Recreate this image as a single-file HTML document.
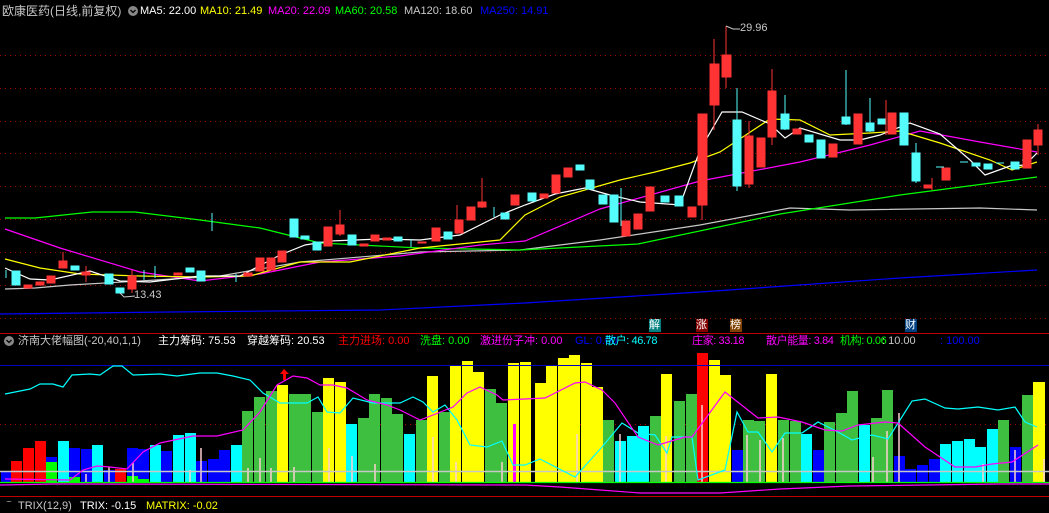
<!DOCTYPE html>
<html><head><meta charset="utf-8"><style>
body{margin:0;background:#000;width:1049px;height:502px;overflow:hidden;position:relative;font-family:"Liberation Sans","Noto Sans CJK SC",sans-serif;}
.t{position:absolute;font-size:11px;white-space:nowrap;line-height:14px}
.s{letter-spacing:-0.4px}
svg{position:absolute;left:0;top:0}
</style></head><body>
<svg width="1049" height="502" viewBox="0 0 1049 502">
<g stroke="#a00000" stroke-width="1" stroke-dasharray="1,4">
<line x1="0" y1="55.5" x2="1049" y2="55.5"/><line x1="0" y1="88.5" x2="1049" y2="88.5"/><line x1="0" y1="121.5" x2="1049" y2="121.5"/><line x1="0" y1="153.5" x2="1049" y2="153.5"/><line x1="0" y1="186.5" x2="1049" y2="186.5"/><line x1="0" y1="219.5" x2="1049" y2="219.5"/><line x1="0" y1="252.5" x2="1049" y2="252.5"/><line x1="0" y1="285.5" x2="1049" y2="285.5"/><line x1="0" y1="318.5" x2="1049" y2="318.5"/><line x1="0" y1="424.5" x2="1049" y2="424.5"/>
</g>
<line x1="0" y1="333.5" x2="1049" y2="333.5" stroke="#c00000"/>
<line x1="0" y1="496.5" x2="1049" y2="496.5" stroke="#c00000"/>
<g fill="none" stroke-width="1.2">
<polyline stroke="#0000ff" points="0,314 170,312 380,310 525,303 700,292 900,278 1037,270"/>
<polyline stroke="#c8c8c8" points="5,289 35,288 70,285 140,281 220,276 300,262 420,252 520,250 600,240 700,225 790,208 850,210 980,208 1037,210"/>
<polyline stroke="#00ff00" points="5,218 35,218 92,212 135,212 200,220 260,228 320,243 420,248 520,250 638,244 780,214 900,195 1037,177"/>
<polyline stroke="#ff00ff" points="5,229 60,248 140,272 200,281 260,274 320,262 400,256 480,245 525,241 600,209 700,181 800,162 870,145 920,131 980,142 1037,152"/>
<polyline stroke="#ffff00" points="5,259 40,268 80,274 140,276 200,277 250,276 300,262 350,262 420,248 500,240 525,215 560,197 620,180 655,172 690,163 720,152 770,119 800,120 830,135 870,133 900,131 940,143 990,160 1012,170 1037,162"/>
<polyline stroke="#ffffff" points="5,268 30,279 50,280 90,271 120,281 150,282 200,276 240,276 280,255 305,245 330,241 380,239 420,240 460,235 500,215 525,205 555,194 585,188 610,195 640,202 680,205 700,150 722,112 742,112 770,124 785,138 800,128 840,140 860,140 880,135 910,123 940,134 970,160 985,175 1010,166 1025,165 1037,153"/>
</g>
<g fill="#54fcfc" stroke="#54fcfc">
<rect x="12" y="271" width="8" height="14"/><rect x="71" y="266" width="8" height="4"/><rect x="105" y="274" width="8" height="10"/><rect x="116" y="288" width="8" height="5"/><rect x="186" y="268" width="8" height="4"/><rect x="197" y="271" width="8" height="10"/><rect x="290" y="219" width="8" height="18"/><rect x="301" y="236" width="8" height="3"/><rect x="313" y="242" width="8" height="8"/><rect x="348" y="235" width="8" height="10"/><rect x="394" y="237" width="8" height="4"/><rect x="444" y="232" width="8" height="7"/><rect x="501" y="213" width="8" height="6"/><rect x="528" y="193" width="8" height="8"/><rect x="576" y="165" width="8" height="5"/><rect x="586" y="180" width="8" height="9"/><rect x="599" y="195" width="8" height="9"/><rect x="610" y="195" width="8" height="27"/><rect x="661" y="196" width="8" height="6"/><rect x="675" y="196" width="8" height="10"/><rect x="733" y="120" width="8" height="66"/><rect x="781" y="114" width="8" height="15"/><rect x="805" y="135" width="8" height="7"/><rect x="817" y="140" width="8" height="18"/><rect x="842" y="117" width="8" height="7"/><rect x="866" y="123" width="8" height="8"/><rect x="878" y="119" width="8" height="5"/><rect x="900" y="113" width="8" height="32"/><rect x="912" y="153" width="8" height="28"/><rect x="972" y="163" width="8" height="3"/><rect x="984" y="164" width="8" height="5"/><rect x="1011" y="162" width="8" height="7"/>
<line x1="6" y1="270" x2="6" y2="278"/><line x1="144" y1="270" x2="144" y2="280"/><line x1="155" y1="266" x2="155" y2="278"/><line x1="236" y1="274" x2="236" y2="282"/><line x1="411" y1="239" x2="411" y2="247"/><line x1="494" y1="207" x2="494" y2="217"/><line x1="212" y1="213" x2="212" y2="231"/><line x1="737" y1="88" x2="737" y2="191"/><line x1="785" y1="95" x2="785" y2="130"/><line x1="846" y1="70" x2="846" y2="125"/><line x1="870" y1="98" x2="870" y2="132"/><line x1="916" y1="143" x2="916" y2="183"/><line x1="621" y1="188" x2="621" y2="226"/>
<line x1="936" y1="167" x2="944" y2="167"/><line x1="960" y1="162" x2="968" y2="162"/><line x1="996" y1="163" x2="1004" y2="163"/><line x1="1022" y1="160" x2="1030" y2="160"/>
</g>
<g fill="#ff3333" stroke="#ff3333">
<rect x="24" y="285" width="8" height="3"/><rect x="36" y="282" width="8" height="3"/><rect x="47" y="276" width="8" height="7"/><rect x="59" y="261" width="8" height="7"/><rect x="82" y="272" width="8" height="3"/><rect x="128" y="276" width="8" height="13"/><rect x="174" y="273" width="8" height="2"/><rect x="244" y="273" width="8" height="3"/><rect x="256" y="258" width="8" height="13"/><rect x="267" y="258" width="8" height="12"/><rect x="278" y="251" width="8" height="11"/><rect x="324" y="227" width="8" height="19"/><rect x="336" y="225" width="8" height="9"/><rect x="360" y="244" width="8" height="2"/><rect x="371" y="235" width="8" height="6"/><rect x="383" y="238" width="8" height="2"/><rect x="418" y="242" width="8" height="1"/><rect x="432" y="228" width="8" height="13"/><rect x="455" y="220" width="8" height="13"/><rect x="467" y="207" width="8" height="13"/><rect x="478" y="202" width="8" height="5"/><rect x="511" y="195" width="8" height="10"/><rect x="540" y="194" width="8" height="4"/><rect x="552" y="175" width="8" height="18"/><rect x="564" y="168" width="8" height="9"/><rect x="622" y="221" width="8" height="15"/><rect x="634" y="214" width="8" height="15"/><rect x="646" y="187" width="8" height="24"/><rect x="688" y="207" width="8" height="10"/><rect x="698" y="114" width="9" height="91"/><rect x="710" y="64" width="9" height="41"/><rect x="722" y="55" width="9" height="22"/><rect x="745" y="136" width="8" height="48"/><rect x="757" y="138" width="8" height="29"/><rect x="768" y="91" width="8" height="46"/><rect x="793" y="129" width="8" height="5"/><rect x="829" y="144" width="8" height="13"/><rect x="854" y="114" width="8" height="30"/><rect x="888" y="113" width="8" height="21"/><rect x="924" y="185" width="8" height="3"/><rect x="942" y="168" width="8" height="12"/><rect x="1023" y="140" width="8" height="28"/><rect x="1034" y="130" width="8" height="15"/>
<line x1="63" y1="252" x2="63" y2="262"/><line x1="86" y1="266" x2="86" y2="282"/><line x1="340" y1="210" x2="340" y2="236"/><line x1="482" y1="178" x2="482" y2="208"/><line x1="714" y1="39" x2="714" y2="130"/><line x1="726" y1="26" x2="726" y2="88"/><line x1="772" y1="69" x2="772" y2="145"/><line x1="702" y1="175" x2="702" y2="220"/><line x1="749" y1="121" x2="749" y2="188"/><line x1="886" y1="100" x2="886" y2="135"/><line x1="932" y1="178" x2="932" y2="190"/><line x1="1038" y1="124" x2="1038" y2="155"/><line x1="132" y1="270" x2="132" y2="293"/><line x1="457" y1="205" x2="457" y2="234"/>
</g>
<g fill="none" stroke="#c8c8c8"><polyline points="120,293 124,297 135,296"/><polyline points="726,26 733,29 740,29"/></g>
<g>
<g fill="#0000ff"><rect x="1" y="471" width="10" height="11"/><rect x="46" y="457" width="11" height="25"/><rect x="69" y="448" width="11" height="34"/><rect x="81" y="449" width="11" height="33"/><rect x="104" y="470" width="11" height="12"/><rect x="127" y="448" width="11" height="34"/><rect x="138" y="449" width="11" height="33"/><rect x="161" y="451" width="11" height="31"/><rect x="196" y="461" width="11" height="21"/><rect x="208" y="459" width="11" height="23"/><rect x="219" y="450" width="11" height="32"/><rect x="732" y="450" width="11" height="32"/><rect x="813" y="450" width="11" height="32"/><rect x="894" y="456" width="11" height="26"/><rect x="905" y="469" width="11" height="13"/><rect x="917" y="465" width="11" height="17"/><rect x="929" y="459" width="11" height="23"/><rect x="1010" y="447" width="11" height="35"/></g>
<g fill="#ff0000"><rect x="11" y="461" width="11" height="21"/><rect x="23" y="448" width="11" height="34"/><rect x="35" y="441" width="11" height="41"/><rect x="115" y="469" width="11" height="13"/><rect x="697" y="353" width="11" height="129"/></g>
<g fill="#00ff00"><rect x="46" y="462" width="11" height="20"/><rect x="69" y="477" width="11" height="5"/><rect x="127" y="476" width="11" height="6"/><rect x="138" y="479" width="11" height="3"/></g>
<g fill="#00ffff"><rect x="58" y="441" width="11" height="41"/><rect x="92" y="445" width="11" height="37"/><rect x="150" y="445" width="11" height="37"/><rect x="173" y="435" width="11" height="47"/><rect x="185" y="433" width="11" height="49"/><rect x="231" y="445" width="11" height="37"/><rect x="346" y="424" width="11" height="58"/><rect x="404" y="434" width="11" height="48"/><rect x="615" y="441" width="11" height="41"/><rect x="627" y="436" width="11" height="46"/><rect x="638" y="426" width="11" height="56"/><rect x="801" y="434" width="11" height="48"/><rect x="859" y="425" width="11" height="57"/><rect x="940" y="444" width="11" height="38"/><rect x="952" y="441" width="11" height="41"/><rect x="964" y="439" width="11" height="43"/><rect x="975" y="447" width="11" height="35"/><rect x="987" y="429" width="11" height="53"/></g>
<g fill="#3fbf3f"><rect x="242" y="411" width="11" height="71"/><rect x="254" y="397" width="11" height="85"/><rect x="266" y="391" width="11" height="91"/><rect x="289" y="394" width="11" height="88"/><rect x="300" y="394" width="11" height="88"/><rect x="312" y="412" width="11" height="70"/><rect x="358" y="418" width="11" height="64"/><rect x="369" y="394" width="11" height="88"/><rect x="381" y="398" width="11" height="84"/><rect x="392" y="414" width="11" height="68"/><rect x="416" y="420" width="11" height="62"/><rect x="439" y="412" width="11" height="70"/><rect x="485" y="389" width="11" height="93"/><rect x="496" y="403" width="11" height="79"/><rect x="603" y="420" width="11" height="62"/><rect x="650" y="416" width="11" height="66"/><rect x="674" y="401" width="11" height="81"/><rect x="686" y="394" width="11" height="88"/><rect x="743" y="420" width="11" height="62"/><rect x="754" y="421" width="11" height="61"/><rect x="778" y="420" width="11" height="62"/><rect x="790" y="421" width="11" height="61"/><rect x="824" y="422" width="11" height="60"/><rect x="836" y="413" width="11" height="69"/><rect x="847" y="391" width="11" height="91"/><rect x="871" y="418" width="11" height="64"/><rect x="882" y="390" width="11" height="92"/><rect x="998" y="420" width="11" height="62"/><rect x="1022" y="395" width="11" height="87"/></g>
<g fill="#ffff00"><rect x="277" y="385" width="11" height="97"/><rect x="323" y="378" width="11" height="104"/><rect x="335" y="382" width="11" height="100"/><rect x="427" y="376" width="11" height="106"/><rect x="450" y="366" width="11" height="116"/><rect x="462" y="361" width="11" height="121"/><rect x="473" y="372" width="11" height="110"/><rect x="508" y="363" width="11" height="119"/><rect x="520" y="362" width="11" height="120"/><rect x="535" y="383" width="11" height="99"/><rect x="546" y="366" width="11" height="116"/><rect x="558" y="358" width="11" height="124"/><rect x="569" y="355" width="11" height="127"/><rect x="581" y="363" width="11" height="119"/><rect x="592" y="387" width="11" height="95"/><rect x="661" y="374" width="11" height="108"/><rect x="709" y="360" width="11" height="122"/><rect x="720" y="375" width="11" height="107"/><rect x="766" y="374" width="11" height="108"/><rect x="1033" y="382" width="12" height="100"/></g>
<rect x="513" y="424" width="3" height="58" fill="#ff00ff"/>
</g>
<g stroke="#ffd0d0" stroke-width="1.5"><line x1="86" y1="474" x2="86" y2="482"/><line x1="109" y1="467" x2="109" y2="482"/><line x1="133" y1="463" x2="133" y2="482"/><line x1="190" y1="470" x2="190" y2="482"/><line x1="201" y1="448" x2="201" y2="482"/><line x1="248" y1="468" x2="248" y2="482"/><line x1="260" y1="458" x2="260" y2="482"/><line x1="271" y1="468" x2="271" y2="482"/><line x1="294" y1="467" x2="294" y2="482"/><line x1="329" y1="448" x2="329" y2="482"/><line x1="352" y1="456" x2="352" y2="482"/><line x1="375" y1="464" x2="375" y2="482"/><line x1="433" y1="437" x2="433" y2="482"/><line x1="456" y1="462" x2="456" y2="482"/><line x1="502" y1="462" x2="502" y2="482"/><line x1="577" y1="434" x2="577" y2="482"/><line x1="620" y1="434" x2="620" y2="482"/><line x1="666" y1="436" x2="666" y2="482"/><line x1="702" y1="405" x2="702" y2="482"/><line x1="747" y1="435" x2="747" y2="482"/><line x1="760" y1="440" x2="760" y2="482"/><line x1="783" y1="438" x2="783" y2="482"/><line x1="873" y1="457" x2="873" y2="482"/><line x1="887" y1="431" x2="887" y2="482"/><line x1="899" y1="413" x2="899" y2="482"/><line x1="983" y1="464" x2="983" y2="482"/><line x1="1015" y1="450" x2="1015" y2="482"/><line x1="1044" y1="459" x2="1044" y2="482"/></g>
<line x1="0" y1="365.5" x2="1049" y2="365.5" stroke="#0000c0"/>
<line x1="0" y1="471.5" x2="1049" y2="471.5" stroke="#c8c8c8" stroke-width="1.5"/>
<line x1="0" y1="482.5" x2="1049" y2="482.5" stroke="#00ff00" stroke-width="1.2"/>
<g fill="none" stroke-width="1.2">
<polyline stroke="#00ffff" points="5,394 30,389 40,384 53,384 63,387 72,375 90,374 100,375 113,366 122,366 133,375 160,374 177,376 200,373 217,373 233,376 250,380 263,393 280,403 307,403 318,397 327,412 340,413 353,398 373,403 400,403 413,397 423,402 433,412 445,405 457,420 470,445 487,447 502,441 513,465 525,465 540,459 575,477 602,447 622,423 638,433 655,435 667,453 672,437 692,437 698,480 725,470 737,412 748,432 758,432 772,452 785,433 802,433 818,422 838,432 852,440 872,435 888,439 912,401 925,399 945,408 958,409 978,407 998,410 1015,407 1025,422 1037,427"/>
<polyline stroke="#ff00ff" points="5,479 70,480 83,470 97,466 110,467 127,469 143,452 160,443 193,436 217,436 243,430 260,412 277,385 293,376 307,378 320,385 333,385 347,388 367,400 387,405 400,410 420,420 433,415 453,407 467,393 480,387 497,395 503,400 525,399 545,398 575,383 585,382 602,390 615,403 638,437 658,445 685,437 692,437 725,392 758,418 778,417 802,422 825,430 842,431 858,425 885,422 898,423 925,447 955,467 975,467 992,464 1012,462 1038,445"/>
<polyline stroke="#ff00ff" points="0,485 55,484 525,485 560,487 600,490 640,493 720,493 780,489 850,486 1000,484 1049,484"/>
</g>
<polygon points="284,369 280,374 283,374 283,380 286,380 286,374 289,374" fill="#ff0000"/>
<circle cx="133" cy="11" r="5" fill="#888"/><path d="M130.5,10 L133,12.5 L135.5,10" stroke="#000" stroke-width="1.3" fill="none"/>
<circle cx="9" cy="341" r="5" fill="#888"/><path d="M6.5,340 L9,342.5 L11.5,340" stroke="#000" stroke-width="1.3" fill="none"/>
<circle cx="9" cy="506" r="5" fill="#888"/>
<rect x="649" y="319" width="12" height="13" fill="#008080"/><rect x="696" y="319" width="12" height="13" fill="#800000"/><rect x="730" y="319" width="12" height="13" fill="#804000"/><rect x="905" y="319" width="12" height="13" fill="#004080"/>
</svg>
<div class="t" style="left:2px;top:4px;color:#c8c8c8;font-size:12px">欧康医药(日线,前复权)</div>
<div class="t" style="left:140px;top:4px;color:#fff">MA5: 22.00</div>
<div class="t" style="left:200px;top:4px;color:#ff0">MA10: 21.49</div>
<div class="t" style="left:268px;top:4px;color:#f0f">MA20: 22.09</div>
<div class="t" style="left:335px;top:4px;color:#0f0">MA60: 20.58</div>
<div class="t" style="left:404px;top:4px;color:#c8c8c8">MA120: 18.60</div>
<div class="t" style="left:480px;top:4px;color:#00f">MA250: 14.91</div>
<div class="t" style="left:740px;top:21px;color:#c8c8c8">29.96</div>
<div class="t" style="left:134px;top:288px;color:#c8c8c8">13.43</div>
<div class="t" style="left:649px;top:318px;color:#fff">解</div>
<div class="t" style="left:696px;top:318px;color:#fff">涨</div>
<div class="t" style="left:730px;top:318px;color:#fff">榜</div>
<div class="t" style="left:905px;top:318px;color:#fff">财</div>
<div class="t" style="left:18px;top:334px;color:#c8c8c8">济南大佬幅图(-20,40,1,1)</div>
<div class="t" style="left:158px;top:334px;color:#fff">主力筹码: 75.53</div>
<div class="t" style="left:247px;top:334px;color:#fff">穿越筹码: 20.53</div>
<div class="t" style="left:338px;top:334px;color:#f00">主力进场: 0.00</div>
<div class="t" style="left:420px;top:334px;color:#0f0">洗盘: 0.00</div>
<div class="t" style="left:480px;top:334px;color:#f0f">激进份子冲: 0.00</div>
<div class="t" style="left:575px;top:334px;color:#00f">GL: 0.00</div>
<div class="t s" style="left:605px;top:334px;color:#0ff">散户: 46.78</div>
<div class="t s" style="left:692px;top:334px;color:#f0f">庄家: 33.18</div>
<div class="t s" style="left:766px;top:334px;color:#f0f">散户能量: 3.84</div>
<div class="t s" style="left:840px;top:334px;color:#0f0">机构: 0.06</div>
<div class="t" style="left:882px;top:334px;color:#c8c8c8">: 10.00</div>
<div class="t" style="left:940px;top:334px;color:#00f">: 100.00</div>
<div class="t" style="left:18px;top:499px;color:#c8c8c8">TRIX(12,9)</div>
<div class="t" style="left:80px;top:499px;color:#fff">TRIX: -0.15</div>
<div class="t" style="left:146px;top:499px;color:#ff0">MATRIX: -0.02</div>
</body></html>
